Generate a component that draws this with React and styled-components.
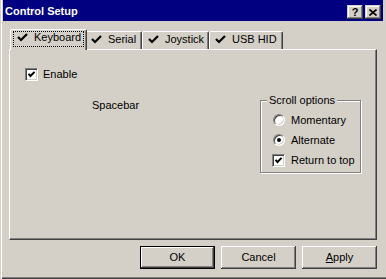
import React from 'react'
import styled, { createGlobalStyle } from 'styled-components'

const face = '#d4d0c8'

const GlobalStyle = createGlobalStyle`
  html, body {
    margin: 0;
    padding: 0;
    background: ${face};
  }
  body {
    font-family: 'Liberation Sans', Arial, sans-serif;
    font-size: 11px;
    line-height: 13px;
    color: #000;
  }
  * {
    box-sizing: border-box;
  }
`

const Window = styled.div`
  width: 386px;
  height: 279px;
  background: ${face};
  display: flex;
  flex-direction: column;
  overflow: hidden;
  box-shadow: inset 1px 0 0 ${face}, inset 2px 0 0 #fff,
    inset 0 -1px 0 #404040, inset 0 -2px 0 #808080;
`

const TitleBar = styled.div`
  height: 21px;
  margin: 0 3px;
  padding: 0 2px;
  background: #000080;
  color: #fff;
  display: flex;
  align-items: flex-start;
`

const Title = styled.div`
  flex: 1;
  margin-top: 5px;
  font-weight: bold;
  font-size: 11px;
`

const CaptionButtons = styled.div`
  display: flex;
  gap: 2px;
  margin-top: 5px;
`

const CaptionButton = styled.div`
  width: 16px;
  height: 14px;
  background: ${face};
  color: #000;
  display: flex;
  align-items: center;
  justify-content: center;
  font-weight: bold;
  font-size: 11px;
  line-height: 11px;
  box-shadow: inset -1px -1px 0 #404040, inset 1px 1px 0 ${face},
    inset -2px -2px 0 #808080, inset 2px 2px 0 #fff;
`

const Content = styled.div`
  flex: 1;
  display: flex;
  flex-direction: column;
  padding: 8px 9px 0 9px;
`

const TabStrip = styled.div`
  display: flex;
  align-items: flex-end;
  height: 20px;
  padding-left: 3px;
`

const Tab = styled.div`
  width: ${p => (p.$active ? p.$w + 4 : p.$w)}px;
  height: ${p => (p.$active ? 21 : 18)}px;
  margin: ${p => (p.$active ? '0 -2px -1px -2px' : '0')};
  z-index: ${p => (p.$active ? 1 : 0)};
  padding: 1px 0 0 ${p => (p.$active ? 2 : 1)}px;
  background: ${face};
  border-style: solid;
  border-width: 1px 1px 0 1px;
  border-color: #fff #404040 transparent #fff;
  border-radius: 2px 2px 0 0;
  box-shadow: inset -1px 0 0 #808080;
  display: flex;
  align-items: flex-start;
`

const TabLabel = styled.div`
  display: flex;
  align-items: flex-start;
  gap: 6px;
  height: 16px;
  padding: 0 3px 0 4px;
  outline: ${p => (p.$focus ? '1px dotted #000' : 'none')};
  outline-offset: -1px;
  white-space: nowrap;
`

const TickMark = styled.svg`
  width: 11px;
  height: 9px;
  margin-top: 2px;
  flex: none;
`

const Panel = styled.div`
  height: 191px;
  border-style: solid;
  border-width: 1px;
  border-color: #fff #404040 #404040 #fff;
  box-shadow: inset -1px -1px 0 #808080;
  padding: 18px 15px 0 15px;
  display: flex;
  flex-direction: column;
`

const OptionRow = styled.label`
  display: flex;
  align-items: center;
  gap: ${p => p.$gap || 6}px;
  height: ${p => p.$h || 20}px;
`

const CheckBox = styled.span`
  width: 13px;
  height: 13px;
  flex: none;
  margin-left: ${p => p.$shift || 0}px;
  background: #fff;
  border: 1px solid;
  border-color: #808080 #fff #fff #808080;
  box-shadow: inset 1px 1px 0 #404040, inset -1px -1px 0 ${face};
  display: flex;
  align-items: center;
  justify-content: center;
`

const Radio = styled.span`
  width: 12px;
  height: 12px;
  flex: none;
  border-radius: 50%;
  background: #fff;
  border: 1px solid;
  border-color: #808080 #fff #fff #808080;
  box-shadow: inset 1px 1px 0 #404040, inset -1px -1px 0 ${face};
  display: flex;
  align-items: center;
  justify-content: center;

  &::after {
    content: '';
    display: ${p => (p.$on ? 'block' : 'none')};
    width: 4px;
    height: 4px;
    border-radius: 50%;
    background: #000;
  }
`

const Body = styled.div`
  display: flex;
  align-items: flex-start;
  margin-top: 18px;
`

const KeyName = styled.div`
  margin-left: 67px;
`

const GroupBox = styled.div`
  margin-left: auto;
  margin-top: 1px;
  width: 101px;
  height: 73px;
  border: 1px solid #808080;
  box-shadow: inset 1px 1px 0 #fff, 1px 1px 0 #fff;
  display: flex;
  flex-direction: column;
`

const Legend = styled.div`
  align-self: flex-start;
  margin: -7px 0 0 6px;
  padding: 0 2px;
  background: ${face};
`

const Options = styled.div`
  padding: 3px 0 0 12px;
  display: flex;
  flex-direction: column;
`

const ButtonRow = styled.div`
  display: flex;
  justify-content: flex-end;
  gap: 6px;
  margin-top: 6px;
`

const Button = styled.div`
  width: 75px;
  height: 23px;
  display: flex;
  align-items: center;
  justify-content: center;
  background: ${face};
  border: ${p => (p.$default ? '1px solid #000' : 'none')};
  box-shadow: ${p =>
    p.$default
      ? `inset -1px -1px 0 #404040, inset 1px 1px 0 #fff, inset -2px -2px 0 #808080`
      : `inset -1px -1px 0 #404040, inset 1px 1px 0 #fff, inset -2px -2px 0 #808080`};
`

const Tick = () => (
  <TickMark viewBox="0 0 11 9">
    <polyline points="1,4 4,7 10,1" fill="none" stroke="#000" strokeWidth="2.2" />
  </TickMark>
)

const Check = ({ on }) => (
  <svg width="9" height="9" viewBox="0 0 9 9">
    {on && <polyline points="1.5,3.8 3.5,6 7.5,1.8" fill="none" stroke="#000" strokeWidth="1.9" />}
  </svg>
)

const tabs = [
  { name: 'Keyboard', w: 73 },
  { name: 'Serial', w: 57 },
  { name: 'Joystick', w: 67 },
  { name: 'USB HID', w: 74 },
]

export default function App() {
  return (
    <>
      <GlobalStyle />
      <Window>
        <TitleBar>
          <Title>Control Setup</Title>
          <CaptionButtons>
            <CaptionButton>?</CaptionButton>
            <CaptionButton>
              <svg width="8" height="7" viewBox="0 0 8 7">
                <path d="M0.5 0.5 L7.5 6.5 M7.5 0.5 L0.5 6.5" stroke="#000" strokeWidth="1.6" />
              </svg>
            </CaptionButton>
          </CaptionButtons>
        </TitleBar>
        <Content>
          <TabStrip>
            {tabs.map((t, i) => (
              <Tab key={t.name} $w={t.w} $active={i === 0}>
                <TabLabel $focus={i === 0}>
                  <Tick />
                  <span>{t.name}</span>
                </TabLabel>
              </Tab>
            ))}
          </TabStrip>
          <Panel>
            <OptionRow $gap={5} $h={13}>
              <CheckBox>
                <Check on />
              </CheckBox>
              Enable
            </OptionRow>
            <Body>
              <KeyName>Spacebar</KeyName>
              <GroupBox>
                <Legend>Scroll options</Legend>
                <Options>
                  <OptionRow>
                    <Radio />
                    Momentary
                  </OptionRow>
                  <OptionRow>
                    <Radio $on />
                    Alternate
                  </OptionRow>
                  <OptionRow>
                    <CheckBox $shift={-1}>
                      <Check on />
                    </CheckBox>
                    Return to top
                  </OptionRow>
                </Options>
              </GroupBox>
            </Body>
          </Panel>
          <ButtonRow>
            <Button $default>OK</Button>
            <Button>Cancel</Button>
            <Button>
              <span>
                <u>A</u>pply
              </span>
            </Button>
          </ButtonRow>
        </Content>
      </Window>
    </>
  )
}
